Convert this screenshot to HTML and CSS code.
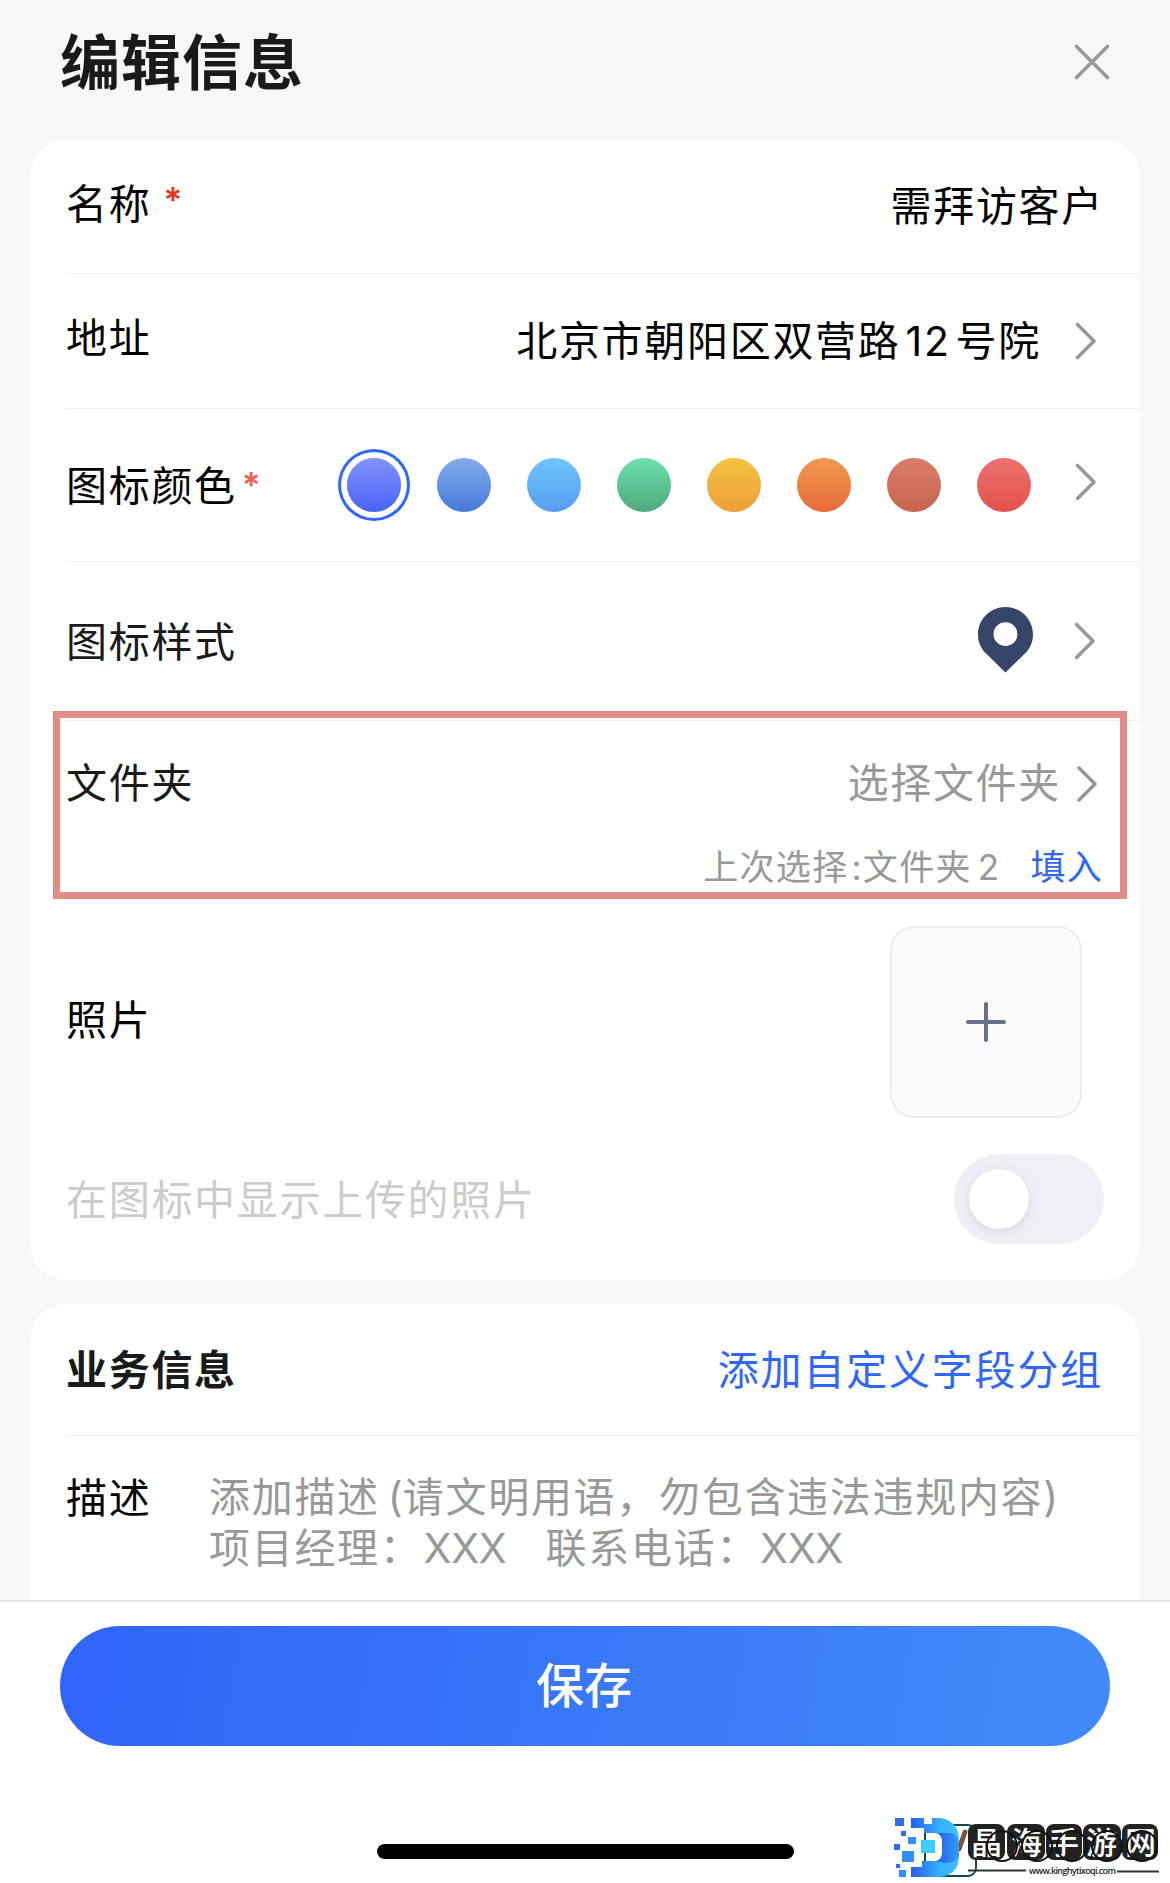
FILE: index.html
```
<!DOCTYPE html>
<html lang="zh-CN">
<head>
  <meta charset="UTF-8">
  <title>编辑信息</title>
  <link rel="stylesheet" href="styles.css">
</head>
<body>
  <div class="page">
    <header class="header">
      <h1 class="title">编辑信息</h1>
      <svg class="close" width="40" height="40" viewBox="0 0 40 40"><path d="M4.5 4.5L35.5 35.5M35.5 4.5L4.5 35.5"/></svg>
    </header>

    <main class="content">
      <section class="card">
        <div class="row row-name">
          <div class="label label-up">名称<span class="required">*</span></div>
          <div class="value">需拜访客户</div>
        </div>
        <div class="row row-address">
          <div class="label label-up">地址</div>
          <div class="value">北京市朝阳区双营路<span class="num">12</span>号院</div>
          <svg class="arrow" width="24" height="40" viewBox="0 0 24 40"><path d="M3.5 3.5L20 20L3.5 36.5"/></svg>
        </div>
        <div class="row row-color">
          <div class="label">图标颜色<span class="required light">*</span></div>
          <div class="colors">
            <span class="color indigo active"></span>
            <span class="color blue"></span>
            <span class="color sky"></span>
            <span class="color green"></span>
            <span class="color yellow"></span>
            <span class="color orange"></span>
            <span class="color brown"></span>
            <span class="color red"></span>
          </div>
          <svg class="arrow" width="24" height="40" viewBox="0 0 24 40"><path d="M3.5 3.5L20 20L3.5 36.5"/></svg>
        </div>
        <div class="row row-style">
          <div class="label dark">图标样式</div>
          <svg class="pin" width="55" height="66" viewBox="0 0 55 66"><path fill-rule="evenodd" d="M27.5 0C42.7 0 55 12.3 55 27.5C55 35 52 41.5 47.2 46.3L27.5 65.5L7.8 46.3C3 41.5 0 35 0 27.5C0 12.3 12.3 0 27.5 0ZM27.5 15.3A11.9 11.9 0 1 0 27.5 39.1A11.9 11.9 0 1 0 27.5 15.3Z"/></svg>
          <svg class="arrow" width="24" height="40" viewBox="0 0 24 40"><path d="M3.5 3.5L20 20L3.5 36.5"/></svg>
        </div>
        <div class="folder">
          <div class="folder-main">
            <div class="label dark">文件夹</div>
            <div class="value gray">选择文件夹</div>
            <svg class="arrow" width="24" height="40" viewBox="0 0 24 40"><path d="M4 4L20 20L4 36"/></svg>
          </div>
          <div class="folder-last">
            <span>上次选择<span class="colon">:</span>文件夹<span class="num">2</span></span>
            <a class="fill">填入</a>
          </div>
          <div class="highlight"></div>
        </div>
        <div class="photo">
          <div class="label">照片</div>
          <div class="upload">
            <svg width="40" height="40" viewBox="0 0 40 40"><path d="M20 2V38M2 20H38"/></svg>
          </div>
        </div>
        <div class="switch-row">
          <div class="label disabled">在图标中显示上传的照片</div>
          <div class="switch"><span class="knob"></span></div>
        </div>
      </section>

      <section class="card">
        <div class="row row-business">
          <div class="label dark bold">业务信息</div>
          <a class="value link">添加自定义字段分组</a>
        </div>
        <div class="desc">
          <div class="label">描述</div>
          <div class="placeholder">添加描述<span class="paren">(</span>请文明用语，勿包含违法违规内容)<br>项目经理：<span class="xxx gap">XXX</span>联系电话：<span class="xxx">XXX</span></div>
        </div>
      </section>
    </main>

    <footer class="footer">
      <button class="save">保存</button>
      <div class="home-bar"></div>
    </footer>
  </div>

  <svg class="watermark" width="280" height="70" viewBox="0 0 280 70">
    <defs>
      <linearGradient id="d" x1="0" y1="0" x2="1" y2="0">
        <stop offset="0" stop-color="#2b5cee"/>
        <stop offset="0.6" stop-color="#36b0fd"/>
        <stop offset="1" stop-color="#3cc4ff"/>
      </linearGradient>
      <linearGradient id="bow" x1="0" y1="0" x2="1" y2="0">
        <stop offset="0" stop-color="#2a5ff0"/>
        <stop offset="1" stop-color="#2f9cf8"/>
      </linearGradient>
    </defs>
    <rect x="35" y="12" width="51" height="51" rx="8" fill="none" stroke="#0f4f4a" stroke-width="2"/>
    <path d="M75 19L69 36" stroke="#7a5536" stroke-width="5" stroke-linecap="round"/>
    <path fill="url(#d)" fill-rule="evenodd" d="M21 5H34V11H42V5H50C62 6 69 15 69 26V44C69 55 62 63 50 64H21V54H32V48H46C50 47 52 44 52 40V28C52 24 50 21 46 20H34V15H21Z"/>
    <path fill="url(#bow)" d="M46 20H62C66 22 69 27 69 33V40C69 46 64 50 56 50L46 48C50 47 52 44 52 40V28C52 24 50 21 46 20Z"/>
    <g fill="#2d6df5">
      <rect x="5" y="5" width="9" height="8"/>
      <rect x="11" y="18" width="5" height="5"/>
      <rect x="4" y="31" width="6" height="6"/>
      <rect x="6" y="51" width="4" height="4"/>
    </g>
    <g fill="#2e90f8">
      <rect x="18" y="24" width="8" height="7"/>
      <rect x="12" y="38" width="12" height="11"/>
      <rect x="9" y="57" width="7" height="7"/>
    </g>
    <rect x="31" y="27" width="14" height="13" fill="#3dccff"/>
    <g fill="#222">
      <rect x="78" y="11" width="37" height="36" rx="8"/>
      <rect x="117" y="11" width="38" height="36" rx="8"/>
      <rect x="156" y="11" width="36" height="36" rx="8"/>
      <rect x="193" y="11" width="38" height="36" rx="8"/>
      <rect x="232" y="11" width="36" height="36" rx="8"/>
    </g>
    <text class="wm-name" x="81 121 158 196 235" y="41">晶海手游网</text>
    <g fill="none" stroke="#111" stroke-width="2">
      <circle cx="112" cy="33" r="15"/>
      <circle cx="147" cy="33" r="15"/>
      <circle cx="182" cy="33" r="15"/>
      <circle cx="217" cy="33" r="15"/>
      <circle cx="252" cy="33" r="15"/>
    </g>
    <path d="M78 57.5H136M227 58.5H269" stroke="#333" stroke-width="2"/>
    <text class="wm-url" x="139" y="61" textLength="87">www.kinghytixoqi.com</text>
  </svg>
</body>
</html>
```
FILE: styles.css
```
* {
    box-sizing: border-box;
}
body {
    margin: 0;
    font-family: Inter, "Noto Sans CJK SC", sans-serif;
    font-size: 41px;
    line-height: 50px;
    letter-spacing: 1.7px;
    color: #000;
    background: #f6f8f8;
}
.page {
    height: 1883px;
    display: flex;
    flex-direction: column;
    overflow: hidden;
}
.header {
    flex: none;
    height: 140px;
    padding: 0 58px 16px 60px;
    display: flex;
    align-items: center;
    justify-content: space-between;
}
.title {
    margin: 0;
    padding-top: 2px;
    font-size: 60px;
    line-height: 70px;
    font-weight: 700;
    letter-spacing: 1px;
    color: #1a1a1a;
}
.close,
.arrow {
    flex: none;
    fill: none;
    stroke: #999;
    stroke-width: 3.6;
    stroke-linecap: round;
    stroke-linejoin: round;
}
.content {
    flex: none;
    height: 1460px;
    padding: 0 30px;
    overflow: hidden;
    display: flex;
    flex-direction: column;
    gap: 24px;
}
.card {
    flex: none;
    background: #fff;
    border-radius: 36px;
    padding-left: 36px;
}
.card:first-child {
    height: 1140px;
}
.card:last-child {
    height: 400px;
}
.row {
    display: flex;
    align-items: center;
    border-bottom: 1px solid #eeeff0;
    padding-right: 42px;
}
.label {
    margin-right: auto;
    padding-top: 1px;
    white-space: nowrap;
}
.label-up {
    padding-bottom: 7px;
}
.dark {
    color: #1a1a1a;
}
.bold {
    font-weight: 700;
}
.disabled {
    color: #ccc;
}
.gray {
    color: #999;
}
.link {
    color: #2f66fb;
}
.required {
    display: inline-block;
    height: 50px;
    vertical-align: top;
    color: #ea3323;
    font-size: 35px;
    font-weight: 600;
    line-height: 42px;
    letter-spacing: 0;
    margin-left: 12px;
}
.required.light {
    color: #f0605a;
    line-height: 48px;
    margin-left: 5px;
}
.row-name {
    height: 134px;
    padding-right: 36px;
}
.row-name .value {
    padding-bottom: 1px;
}
.row-address {
    height: 135px;
}
.row-address .arrow {
    margin-left: 33px;
}
.num {
    margin: 0 5px;
}
.row-color {
    height: 153px;
}
.row-color .arrow {
    margin: 0 0 7px 43px;
}
.colors {
    display: flex;
    gap: 36px;
}
.color {
    width: 54px;
    height: 54px;
    border-radius: 50%;
}
.active {
    box-shadow: 0 0 0 6px #fff, 0 0 0 9px #2f66fb;
}
.indigo { background: linear-gradient(#8292f8, #4a62f8); }
.blue { background: linear-gradient(#83acec, #447ad7); }
.sky { background: linear-gradient(#6fc4fb, #589df0); }
.green { background: linear-gradient(#6be0ae, #4fa97b); }
.yellow { background: linear-gradient(#f4c242, #ee9f38); }
.orange { background: linear-gradient(#ef9a51, #e96a3a); }
.brown { background: linear-gradient(#d97d69, #c7644c); }
.red { background: linear-gradient(#ec716d, #e5514c); }
.row-style {
    height: 159px;
}
.row-style .arrow {
    margin: 0 1px 0 40px;
}
.pin {
    fill: #38456a;
    margin-bottom: 3px;
}
.folder {
    position: relative;
    height: 205px;
    padding: 36px 37px 0 0;
}
.folder-main {
    display: flex;
    align-items: center;
    padding-right: 4px;
}
.folder-main .value {
    padding-top: 1px;
}
.folder-main .arrow {
    margin: 2px 0 0 14px;
}
.folder-last {
    display: flex;
    justify-content: flex-end;
    gap: 30px;
    margin-top: 34px;
    font-size: 35px;
    letter-spacing: 1.3px;
    color: #999;
}
.folder-last .num {
    margin: 0 0 0 6px;
}
.colon {
    margin-left: 3px;
}
.fill {
    color: #2f66fb;
}
/* frame drawn over the folder block */
.highlight {
    position: absolute;
    left: -13px;
    right: 13px;
    top: -10px;
    height: 188px;
    border: 7px solid #e38d89;
}
.photo {
    display: flex;
    align-items: center;
    height: 192px;
    padding-right: 58px;
}
.photo .label {
    padding-bottom: 6px;
}
.upload {
    width: 192px;
    height: 192px;
    border: 2px solid #ececec;
    border-radius: 24px;
    background: #fafafa;
    display: flex;
    align-items: center;
    justify-content: center;
}
.upload svg {
    fill: none;
    stroke: #68708c;
    stroke-width: 4;
    stroke-linecap: round;
}
.switch-row {
    display: flex;
    align-items: center;
    margin-top: 36px;
    height: 90px;
    padding-right: 36px;
}
.switch {
    width: 150px;
    height: 90px;
    padding: 15px;
    border-radius: 45px;
    background: #eff0f5;
}
.knob {
    display: block;
    width: 60px;
    height: 60px;
    border-radius: 50%;
    background: #fff;
    box-shadow: 0 3px 12px rgba(0, 0, 0, 0.1);
}
.row-business {
    height: 132px;
    padding-right: 37px;
}
.row-business .value {
    padding-top: 1px;
    letter-spacing: 1.8px;
}
.desc {
    display: flex;
    padding-top: 36px;
}
.desc .label {
    width: 143px;
    margin-right: 0;
    padding-top: 1px;
}
.placeholder {
    color: #999;
    line-height: 51px;
    white-space: nowrap;
}
.paren {
    margin-left: 8px;
    letter-spacing: 0;
}
.xxx {
    margin-left: 1px;
    letter-spacing: -0.3px;
}
.gap {
    margin-right: 39px;
}
.footer {
    flex: 1;
    display: flex;
    flex-direction: column;
    align-items: center;
    padding: 24px 60px 0;
    border-top: 2px solid #e3e4e5;
    background: #fff;
}
.save {
    width: 1050px;
    height: 120px;
    border: 0;
    border-radius: 60px;
    padding: 0 2px 9px 0;
    background: linear-gradient(100deg, #3064f8, #428bf8);
    color: #fff;
    font-family: inherit;
    font-size: 48px;
    font-weight: 500;
    letter-spacing: 0;
}
.home-bar {
    width: 417px;
    height: 15px;
    margin-top: 98px;
    border-radius: 8px;
    background: #000;
}
.watermark {
    position: absolute;
    left: 890px;
    top: 1813px;
}
.wm-name {
    font-size: 31px;
    font-weight: 500;
    letter-spacing: 0;
    fill: #fff;
}
.wm-url {
    font-family: "Open Sans", sans-serif;
    font-size: 9px;
    font-weight: 600;
    letter-spacing: 0;
    fill: #222;
}
```
